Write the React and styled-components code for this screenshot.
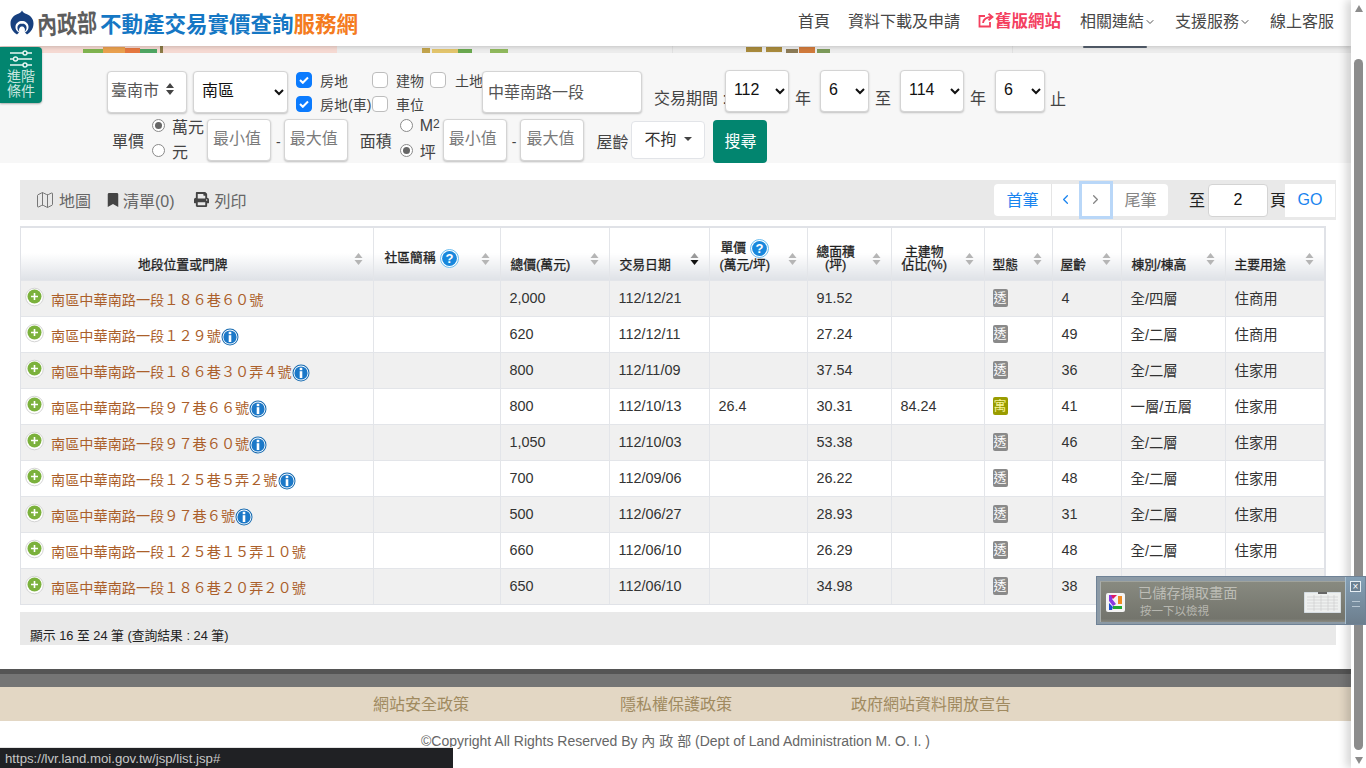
import React from "react";
import styled, { createGlobalStyle } from "styled-components";
import { Map as MapIcon, ChevronDown, ChevronLeft, ChevronRight } from "lucide-react";
import { FaBookmark, FaPrint } from "react-icons/fa";

const FONT = `"Liberation Sans", "Noto Sans CJK TC", sans-serif`;

const Global = createGlobalStyle`
  html, body { margin: 0; padding: 0; height: 768px; overflow: hidden; background: #fff; }
  body { font-family: ${FONT}; color: #212529; }
  * { box-sizing: border-box; }
`;

const Shell = styled.div`
  position: relative; display: flex; width: 1366px; height: 768px; overflow: hidden;
`;
const Page = styled.div`
  width: 1351px; flex: none; display: flex; flex-direction: column;
`;

/* header */
const Header = styled.header`
  height: 46px; display: flex; align-items: center; justify-content: space-between;
  padding: 0 17px 0 10px; background: #fff; position: relative; z-index: 2;
  box-shadow: 0 1px 4px rgba(0,0,0,.18);
`;
const Brand = styled.div`display: flex; align-items: center; height: 46px;`;
const Ministry = styled.span`
  font-size: 20px; font-weight: 700; color: #5d5d5d; margin: 0 3px 0 3px; width: 60px;
  letter-spacing: 0; white-space: nowrap; transform: rotate(-3deg) translateY(-1px) scale(1, 1.25);
`;
const SiteTitle = styled.span`
  font-size: 21.5px; font-weight: 700; white-space: nowrap; margin-top: -1px;
  color: ${p => (p.$accent ? "#f47b20" : "#1577c4")};
`;
const Nav = styled.nav`display: flex; align-items: center; gap: 19px; margin-top: -6px;`;
const NavLink = styled.a`
  display: inline-flex; align-items: center; white-space: nowrap;
  margin-left: ${p => p.$ml || 0}px;
  font-size: ${p => (p.$hot ? 16.5 : 16)}px;
  color: ${p => (p.$hot ? "#f4405f" : "#474747")};
  font-weight: ${p => (p.$hot ? 700 : 400)};
`;
const NavChevron = styled(ChevronDown)`color: #555; margin-top: 3px;`;

const Banner = styled.svg`display: block; width: 1351px; height: 7px; flex: none;`;

/* filters */
const FilterPanel = styled.section`
  height: 110px; flex: none; background: #f7f7f7; padding: 18px 0 0; display: flex; flex-direction: column; gap: 6px;
`;
const AdvancedButton = styled.div`
  position: absolute; left: 0; top: 47px; width: 42px; height: 56px; z-index: 3;
  background: #02856f; color: #c9e6df; border-radius: 0 4px 4px 0;
  display: flex; flex-direction: column; align-items: center; font-size: 14px; line-height: 15px;
  box-shadow: 0 1px 2px rgba(0,0,0,.3);
`;
const SliderGlyph = styled.svg`margin: 3px 0 1px; flex: none;`;
const AdvancedLabel = styled.span`display: block;`;
const FilterRow = styled.div`
  display: flex; align-items: flex-start; height: 42px; padding-left: ${p => p.$left}px;
`;
const Control = styled.div`
  width: ${p => p.$w}px; height: 42px; background: #fff; border: 1px solid #d4d4d4; border-radius: 4px;
  box-shadow: 0 1px 2px rgba(0,0,0,.22); margin-left: ${p => p.$ml || 0}px; flex: none;
  display: flex; align-items: center; justify-content: space-between; padding: 0 12px 6px 3px;
  font-size: 16px; color: #555;
`;
const NativeSelect = styled.select`
  width: ${p => p.$w}px; height: 42px; margin-left: ${p => p.$ml || 0}px; flex: none;
  margin-top: ${p => p.$mt || 0}px;
  background: #fff; border: 1px solid #d4d4d4; border-radius: 4px; color: #111;
  font: 16px ${FONT}; padding: 0 0 4px ${p => p.$pl || 4}px; box-shadow: 0 1px 2px rgba(0,0,0,.22);
`;
const CheckGrid = styled.div`
  display: grid; grid-template-columns: 76px 58px 52px; grid-auto-rows: 24px; margin: -3px 0 0 8px; width: 186px; flex: none;
`;
const CheckItem = styled.label`
  display: flex; align-items: center; font-size: 14px; color: #444; white-space: nowrap; height: 24px; padding-bottom: 1px;
`;
const CheckBox = styled.span`
  width: 16px; height: 16px; border-radius: 4px; flex: none; display: flex; align-items: center; justify-content: center;
  background: ${p => (p.$on ? "#0b7bfe" : "#fff")};
  border: 1px solid ${p => (p.$on ? "#0b7bfe" : "#bdbdbd")};
  margin-right: ${p => p.$mr}px;
`;
const TextField = styled.input`
  width: ${p => p.$w}px; height: 42px; flex: none; margin-left: ${p => p.$ml || 0}px;
  background: #fff; border: 1px solid #d4d4d4; border-radius: 4px; outline: none;
  box-shadow: 0 1px 2px rgba(0,0,0,.22); padding: 0 6px 2px 5px; font: 16px ${FONT}; color: #555;
  &::placeholder { color: #7b7b7b; opacity: 1; }
`;
const FormLabel = styled.span`
  font-size: ${p => p.$fs || 16}px; color: #444; white-space: nowrap; flex: none;
  margin-left: ${p => p.$ml || 0}px; margin-top: ${p => p.$mt || 0}px; line-height: 20px;
`;
const RadioStack = styled.div`
  width: ${p => p.$w}px; display: flex; flex-direction: column; gap: 6px; flex: none; margin-left: ${p => p.$ml || 0}px; margin-top: -3px;
`;
const RadioItem = styled.label`
  display: flex; align-items: center; height: 19px; font-size: 16px; color: #444; white-space: nowrap;
  sup { font-size: 12px; line-height: 0; position: relative; top: -2px; vertical-align: baseline; }
`;
const RadioDot = styled.span`
  width: 13px; height: 13px; border-radius: 50%; border: 1px solid #8a8a8a; background: #fff; flex: none;
  margin-right: 7px; display: flex; align-items: center; justify-content: center;
  &::after { content: ""; width: 7px; height: 7px; border-radius: 50%; background: ${p => (p.$on ? "#666" : "transparent")}; }
`;
const AgeButton = styled.div`
  width: 74px; height: 38px; margin: 2px 0 0 3px; flex: none; background: #fff; border: 1px solid #e2e4e8; border-radius: 4px;
  display: flex; align-items: center; justify-content: center; gap: 8px; font-size: 16px; color: #333; padding-bottom: 5px;
  &::after { content: ""; border: 4px solid transparent; border-top-color: #444; border-bottom: 0; margin-top: 2px; }
`;
const SearchButton = styled.div`
  width: 54px; height: 43px; margin: 1px 0 0 8px; flex: none; background: #02856f; color: #fff; border-radius: 4px;
  display: flex; align-items: center; justify-content: center; font-size: 16px; padding-bottom: 3px;
`;

/* results */
const Results = styled.main`
  padding: 17px 15px 0 20px; flex: none; height: 506px;
`;
const Toolbar = styled.div`
  height: 40px; background: #e9e9e9; display: flex; align-items: center; justify-content: space-between; padding: 0 1px 0 15px;
`;
const ToolGroup = styled.div`display: flex; align-items: center;`;
const Tool = styled.span`
  display: inline-flex; align-items: center; gap: ${p => p.$gap || 4}px; font-size: 16px; color: #666; white-space: nowrap;
  margin-left: ${p => p.$ml || 0}px; padding-bottom: 1px;
  svg { color: ${p => p.$soft ? "#777" : "#444"}; }
`;
const Pager = styled.div`display: flex; align-items: center; height: 38px;`;
const PageButton = styled.span`
  height: ${p => (p.$focus ? 38 : 32)}px; width: ${p => p.$w}px; background: #fff; flex: none;
  display: flex; align-items: center; justify-content: center; font-size: 16px; padding-bottom: 2px;
  color: ${p => (p.$off ? "#858585" : "#1a84ef")};
  border-left: ${p => (p.$sep ? "1px solid #e5e5e5" : "0")};
  border-radius: ${p => p.$r || 0};
  ${p => p.$focus && "border: 3px solid #b9d7f8; margin-left: -1px; z-index: 1; position: relative;"}
`;
const PagerText = styled.span`font-size: 16px; color: #222; flex: none; margin-left: ${p => p.$ml || 0}px; padding-bottom: 2px;`;
const PageInput = styled.div`
  width: 60px; height: 33px; background: #fff; border: 1px solid #d4d4d4; border-radius: 4px; margin-left: 3px; flex: none;
  display: flex; align-items: center; justify-content: center; font-size: 16px; color: #111;
`;
const GoButton = styled.span`
  width: 50px; height: 33px; background: #fff; color: #1a84ef; font-size: 16px; flex: none;
  display: flex; align-items: center; justify-content: center; margin-left: -1px;
`;

const TableFrame = styled.div`margin-top: 6px; width: 1306px; border: 2px solid #e0e2e7; border-left-width: 1px; border-bottom-width: 1px;`;
const Table = styled.table`
  width: 1303px; border-collapse: collapse; table-layout: fixed;
`;
const Th = styled.th`
  height: 52px; position: relative; vertical-align: bottom; text-align: ${p => (p.$center ? "center" : "left")};
  padding: 0 ${p => p.$pr || 10}px ${p => p.$pb || 9}px ${p => p.$pl || 10}px; font-size: 12.8px; line-height: 13px; font-weight: 400; color: #1f1f1f;
  -webkit-text-stroke: .3px #1f1f1f;
  background: linear-gradient(to bottom, #fff 48%, #dfe2e7 100%);
  border-left: 1px solid #e3e5e9;
  &:first-child { border-left: 0; }
`;
const HeadStack = styled.span`display: inline-block; text-align: center; white-space: nowrap;`;
const SortMark = styled.svg`position: absolute; right: 10px; top: 25px;`;
const Tr = styled.tr`background: ${p => (p.$odd ? "#f0f0f0" : "#fff")};`;
const Td = styled.td`
  height: 36px; padding: 0 9px ${p => (p.$cjk ? 2 : 0)}px; font-size: 14.4px; color: #333; border-left: 1px solid #e3e5e9; border-top: 1px solid #e3e5e9;
  white-space: nowrap;
  &:first-child { border-left: 0; padding: 0 0 0 4px; }
`;
const AddressCell = styled.div`display: flex; align-items: center; height: 34px;`;
const AddressText = styled.span`font-size: 14.17px; color: #ab5f2b; margin: 1px 0 0 7px; white-space: nowrap;`;
const TypeBadge = styled.span`
  display: block; width: 15px; height: 18px; border-radius: 2px; font-size: 13px; line-height: 17px; text-align: center; margin-left: -1px;
  background: ${p => (p.$kind === "寓" ? "#999c00" : "#8a8a8a")};
  color: ${p => (p.$kind === "寓" ? "#f6f39a" : "#fff")};
`;
const Summary = styled.div`
  margin-top: 7px; width: 1316px; height: 33px; background: #e9e9e9; color: #222; font-size: 12.8px; line-height: 17px;
  padding: 15px 0 0 10px; white-space: nowrap;
`;

/* footer */
const DarkBar = styled.div`height: 18px; flex: none; background: #757575; border-top: 5px solid #555;`;
const PolicyBar = styled.div`
  height: 34px; flex: none; background: #e3d7c4; display: flex; align-items: center; padding: 0 0 3px 373px; color: #a08a60; font-size: 16px;
`;
const PolicyLink = styled.a`margin-left: ${p => p.$ml || 0}px; white-space: nowrap;`;
const Copyright = styled.div`
  text-align: center; font-size: 14px; color: #666; margin-top: 9px; white-space: nowrap;
`;

/* browser chrome */
const StatusBubble = styled.div`
  position: absolute; left: 0; bottom: 0; width: 453px; height: 21px; background: #202124; color: #c7c7c7;
  font-size: 13.2px; line-height: 21px; padding-left: 5px; border-top: 1px solid #e4e4e4; z-index: 5;
`;
const ScrollTrack = styled.div`
  width: 15px; flex: none; background: #fff; display: flex; flex-direction: column; align-items: center; position: relative;
  z-index: 4; box-shadow: -5px 0 8px rgba(0,0,0,.16); padding-top: 5px;
`;
const ScrollArrow = styled.span`
  width: 0; height: 0; border-left: 4.5px solid transparent; border-right: 4.5px solid transparent;
  ${p => (p.$down ? "border-top: 7px solid #8c8c8c; margin-top: 7px;" : "border-bottom: 7px solid #8c8c8c;")}
`;
const ScrollThumb = styled.span`
  width: 9px; height: 691px; margin-top: 47px; background: #8c8c8c; border-radius: 5px;
`;
const Toast = styled.aside`
  position: absolute; left: 1096px; top: 576px; width: 270px; height: 49px; z-index: 6; display: flex;
  background: #8c9aa6; border: 1px solid #6f8296;
`;
const ToastBody = styled.div`
  flex: 1; margin: 4px 0 2px 3px; padding-left: 5px; background: linear-gradient(#888a80, #73746c 92%, #8a8a82); display: flex; align-items: center;
  border-left: 1px solid #a9aeac; border-top: 1px solid #a0a39c;
`;
const ToastLogo = styled.svg`flex: none;`;
const ToastText = styled.div`flex: 1; margin-left: 13px; color: #bdbdb6; line-height: 18px; margin-top: -1px;`;
const ToastTitle = styled.div`font-size: 14.2px; white-space: nowrap;`;
const ToastSub = styled.div`font-size: 11.5px; margin-left: 2px; white-space: nowrap; color: #b7b7b0;`;
const ToastThumb = styled.svg`flex: none; margin-right: 4px;`;
const ToastSide = styled.div`
  width: 20px; flex: none; background: linear-gradient(#84a0b6, #6d7e8d); border-left: 1px solid #a9c0d0;
  display: flex; flex-direction: column; align-items: center; padding-top: 4px; gap: 5px;
`;
const ToastClose = styled.span`
  width: 11px; height: 11px; border: 1px solid #e6eef3; color: #fff; font-size: 10px; line-height: 9px; text-align: center; background: #6b7f90;
`;
const ToastGrip = styled.span`
  width: 8px; height: 6px; border-top: 1px solid #b7c6d2; border-bottom: 1px solid #b7c6d2; margin-top: 4px; position: relative;
`;

/* drawings */
const LogoMark = () => (
  <svg width="24" height="26" viewBox="0 0 24 26">
    <path d="M12 .5c.8 2 2.600 2.800 4.500 3.600C20.800 5.800 23.500 9.200 23.500 13.500c0 4.800-2.700 8.800-6.500 10.900l-2-2c2.800-1.500 3.800-3.800 3.500-6.200C18 13 15.300 11 12 11s-6 2-6.500 5.200c-.3 2.400.7 4.700 3.500 6.200l-2 2C3.200 22.300.5 18.300.5 13.500.5 9.200 3.200 5.800 7.500 4.100 9.400 3.300 11.200 2.500 12 .5z" fill="#17407f" />
    <path d="M12 13.500c-2.800 0-4.600 1.900-4.600 4.300 0 1.600.8 3 2 3.900-.5-1.400-.5-2.800.2-3.800.6-.9 1.400-1.300 2.400-1.300s1.800.4 2.400 1.300c.7 1 .7 2.400.2 3.800 1.200-.9 2-2.300 2-3.900 0-2.400-1.800-4.300-4.600-4.300z" fill="#17407f" />
  </svg>
);
const ShareBox = () => (
  <svg width="16" height="15" viewBox="0 0 16 15" fill="none" stroke="#f4405f" strokeWidth="1.8" style={{ marginRight: 1 }}>
    <path d="M7 3H1.500v10.500h10.500V9" />
    <path d="M5 10c.5-4 3-6 9-6M10.500 .8 14.500 4l-4 3.200" />
  </svg>
);
const Tick = () => (
  <svg width="10" height="8" viewBox="0 0 10 8" fill="none" stroke="#fff" strokeWidth="2"><path d="M1 4l2.800 2.800L9 1.500" /></svg>
);
const UpDown = () => (
  <svg width="8" height="12" viewBox="0 0 8 12" fill="#444"><path d="M4 0l4 5H0zM4 12l4-5H0z" /></svg>
);
const Sort = ({ active }) => (
  <SortMark width="9" height="12" viewBox="0 0 9 12">
    <path d="M4.500 0l4 5h-8z" fill={active ? "#999" : "#b5b5b5"} />
    <path d="M4.500 12l4-5h-8z" fill={active ? "#111" : "#b5b5b5"} />
  </SortMark>
);
const PlusIcon = () => (
  <svg width="19" height="20" viewBox="0 0 19 20" style={{ flex: "none", marginTop: -3 }}>
    <circle cx="9.500" cy="10" r="8.800" fill="#fff" stroke="#cfcfcf" strokeWidth=".9" />
    <circle cx="9.500" cy="9.500" r="7" fill="#7bb13c" />
    <path d="M9.500 6v7M6 9.500h7" stroke="#fff" strokeWidth="1.600" />
  </svg>
);
const InfoIcon = () => (
  <svg width="18" height="18" viewBox="0 0 18 18" style={{ flex: "none", marginTop: 5 }}>
    <circle cx="9" cy="9" r="8.500" fill="#1469b0" />
    <circle cx="9" cy="9" r="7.500" fill="#fff" />
    <circle cx="9" cy="9" r="6.600" fill="#1b78c8" />
    <rect x="7.700" y="3.800" width="2.600" height="2.400" fill="#fff" />
    <rect x="7.700" y="7.200" width="2.600" height="6.800" fill="#fff" />
  </svg>
);
const HelpIcon = () => (
  <svg width="19" height="19" viewBox="0 0 19 19" style={{ verticalAlign: "middle", marginLeft: 4 }}>
    <circle cx="9.500" cy="9.500" r="9" fill="#fff" stroke="#69bdf0" strokeWidth="1" />
    <circle cx="9.500" cy="9.500" r="7.400" fill="#1888dd" />
    <text x="9.500" y="14" textAnchor="middle" fontSize="13" fontWeight="700" fill="#fff" stroke="none" fontFamily="Liberation Sans">?</text>
  </svg>
);
const Sliders = () => (
  <SliderGlyph width="22" height="18" viewBox="0 0 22 18" fill="#02856f" stroke="#e9f6f3" strokeWidth="1.400">
    <path d="M0 3h22M0 9h22M0 15h22" />
    <circle cx="15" cy="3" r="2" />
    <circle cx="5.500" cy="9" r="2" />
    <circle cx="15" cy="15" r="2" />
  </SliderGlyph>
);

const COLS = [352, 127, 109, 100, 98, 84, 93, 68, 69, 104, 99];

const ROWS = [
  ["南區中華南路一段１８６巷６０號", false, "2,000", "112/12/21", "", "91.52", "", "透", "4", "全/四層", "住商用"],
  ["南區中華南路一段１２９號", true, "620", "112/12/11", "", "27.24", "", "透", "49", "全/二層", "住商用"],
  ["南區中華南路一段１８６巷３０弄４號", true, "800", "112/11/09", "", "37.54", "", "透", "36", "全/二層", "住家用"],
  ["南區中華南路一段９７巷６６號", true, "800", "112/10/13", "26.4", "30.31", "84.24", "寓", "41", "一層/五層", "住家用"],
  ["南區中華南路一段９７巷６０號", true, "1,050", "112/10/03", "", "53.38", "", "透", "46", "全/二層", "住家用"],
  ["南區中華南路一段１２５巷５弄２號", true, "700", "112/09/06", "", "26.22", "", "透", "48", "全/二層", "住家用"],
  ["南區中華南路一段９７巷６號", true, "500", "112/06/27", "", "28.93", "", "透", "31", "全/二層", "住家用"],
  ["南區中華南路一段１２５巷１５弄１０號", false, "660", "112/06/10", "", "26.29", "", "透", "48", "全/二層", "住家用"],
  ["南區中華南路一段１８６巷２０弄２０號", false, "650", "112/06/10", "", "34.98", "", "透", "38", "全/二層", "住家用"],
];

const Check = ({ on, label, mr }) => (
  <CheckItem><CheckBox $on={on} $mr={mr}>{on && <Tick />}</CheckBox>{label}</CheckItem>
);

export default function App() {
  return (
    <Shell>
      <Global />
      <Page>
        <Header>
          <Brand>
            <LogoMark />
            <Ministry>內政部</Ministry>
            <SiteTitle>不動產交易實價查詢</SiteTitle>
            <SiteTitle $accent>服務網</SiteTitle>
          </Brand>
          <Nav>
            <NavLink>首頁</NavLink>
            <NavLink $ml={-1}>資料下載及申請</NavLink>
            <NavLink $hot $ml={-1}><ShareBox />舊版網站</NavLink>
            <NavLink>相關連結<NavChevron size={12} /></NavLink>
            <NavLink>支援服務<NavChevron size={12} /></NavLink>
            <NavLink>線上客服</NavLink>
          </Nav>
        </Header>
        <Banner viewBox="0 0 1351 7" preserveAspectRatio="none">
          <rect width="1351" height="7" fill="#ececec" />
          <rect width="337" height="7" fill="#f5d9d2" />
          <rect x="672" width="1" height="7" fill="#e0e0e0" />
          <rect x="1012" width="1" height="7" fill="#e0e0e0" />
          <rect x="83" y="3" width="20" height="4" fill="#7fb34f" />
          <rect x="103" y="1" width="22" height="6" fill="#e9a04e" />
          <rect x="125" y="2" width="15" height="5" fill="#e5773f" />
          <rect x="140" y="3" width="17" height="4" fill="#4ea562" />
          <rect x="160" y="0" width="3" height="7" fill="#8a7a45" />
          <rect x="422" y="2" width="8" height="5" fill="#c2a44c" />
          <rect x="432" y="3" width="26" height="4" fill="#e2c46c" />
          <rect x="458" y="3" width="14" height="4" fill="#6aa84f" />
          <rect x="490" y="3" width="18" height="4" fill="#8fb85c" />
          <rect x="746" y="1" width="16" height="5" fill="#a88a3c" />
          <rect x="766" y="1" width="16" height="5" fill="#a88a3c" />
          <rect x="786" y="3" width="12" height="4" fill="#8b7a55" />
          <rect x="799" y="1" width="16" height="6" fill="#d07a3c" />
          <rect x="817" y="3" width="13" height="4" fill="#7c9a5a" />
          <rect x="1083" width="64" height="2" rx="1" fill="#55606e" />
        </Banner>
        <FilterPanel>
          <FilterRow $left={107}>
            <Control $w={80}>臺南市<UpDown /></Control>
            <NativeSelect $w={95} $ml={6} $pl={4} defaultValue="南區"><option>南區</option></NativeSelect>
            <CheckGrid>
              <Check on label="房地" mr={8} />
              <Check label="建物" mr={8} />
              <Check label="土地" mr={9} />
              <Check on label="房地(車)" mr={8} />
              <Check label="車位" mr={8} />
            </CheckGrid>
            <TextField $w={160} defaultValue="中華南路一段" />
            <FormLabel $ml={12} $mt={18}>交易期間 :</FormLabel>
            <NativeSelect $w={64} $ml={-2} $mt={-1} $pl={4} defaultValue="112"><option>112</option></NativeSelect>
            <FormLabel $ml={6} $mt={18}>年</FormLabel>
            <NativeSelect $w={49} $ml={9} $mt={-1} defaultValue="6"><option>6</option></NativeSelect>
            <FormLabel $ml={6} $mt={18}>至</FormLabel>
            <NativeSelect $w={64} $ml={9} $mt={-1} defaultValue="114"><option>114</option></NativeSelect>
            <FormLabel $ml={6} $mt={18}>年</FormLabel>
            <NativeSelect $w={50} $ml={9} $mt={-1} defaultValue="6"><option>6</option></NativeSelect>
            <FormLabel $ml={5} $mt={19}>止</FormLabel>
          </FilterRow>
          <FilterRow $left={112}>
            <FormLabel $mt={13}>單價</FormLabel>
            <RadioStack $w={55} $ml={8}>
              <RadioItem><RadioDot $on />萬元</RadioItem>
              <RadioItem><RadioDot />元</RadioItem>
            </RadioStack>
            <TextField $w={64} placeholder="最小值" />
            <FormLabel $ml={5} $mt={13} $fs={14}>-</FormLabel>
            <TextField $w={64} $ml={3} placeholder="最大值" />
            <FormLabel $ml={12} $mt={13}>面積</FormLabel>
            <RadioStack $w={43} $ml={8}>
              <RadioItem><RadioDot />M<sup>2</sup></RadioItem>
              <RadioItem><RadioDot $on />坪</RadioItem>
            </RadioStack>
            <TextField $w={64} placeholder="最小值" />
            <FormLabel $ml={5} $mt={13} $fs={14}>-</FormLabel>
            <TextField $w={64} $ml={4} placeholder="最大值" />
            <FormLabel $ml={12} $mt={14}>屋齡</FormLabel>
            <AgeButton>不拘</AgeButton>
            <SearchButton>搜尋</SearchButton>
          </FilterRow>
        </FilterPanel>
        <AdvancedButton>
          <Sliders />
          <AdvancedLabel>進階</AdvancedLabel>
          <AdvancedLabel>條件</AdvancedLabel>
        </AdvancedButton>
        <Results>
          <Toolbar>
            <ToolGroup>
              <Tool $soft><MapIcon size={20} strokeWidth={1.2} />地圖</Tool>
              <Tool $ml={15} $gap={3}><FaBookmark size={14} />清單(0)</Tool>
              <Tool $ml={19} $gap={6}><FaPrint size={15} />列印</Tool>
            </ToolGroup>
            <Pager>
              <PageButton $w={57} $r="4px 0 0 4px">首筆</PageButton>
              <PageButton $w={29} $sep><ChevronLeft size={15} /></PageButton>
              <PageButton $w={34} $focus $off><ChevronRight size={15} /></PageButton>
              <PageButton $w={55} $off $r="0 4px 4px 0">尾筆</PageButton>
              <PagerText $ml={21}>至</PagerText>
              <PageInput>2</PageInput>
              <PagerText $ml={2}>頁</PagerText>
              <GoButton>GO</GoButton>
            </Pager>
          </Toolbar>
          <TableFrame>
            <Table>
              <colgroup>
                {COLS.map((w, i) => <col key={i} style={{ width: w }} />)}
              </colgroup>
              <thead>
                <tr>
                  <Th $center $pr={38}>地段位置或門牌<Sort /></Th>
                  <Th $pb={12} $pl={11}>社區簡稱<HelpIcon /><Sort /></Th>
                  <Th>總價(萬元)<Sort /></Th>
                  <Th>交易日期<Sort active /></Th>
                  <Th><HeadStack>單價<HelpIcon /><br />(萬元/坪)</HeadStack><Sort /></Th>
                  <Th $pl={9}><HeadStack>總面積<br />(坪)</HeadStack><Sort /></Th>
                  <Th><HeadStack>主建物<br />佔比(%)</HeadStack><Sort /></Th>
                  <Th $pl={8}>型態<Sort /></Th>
                  <Th $pl={8}>屋齡<Sort /></Th>
                  <Th>棟別/棟高<Sort /></Th>
                  <Th $pl={9}>主要用途<Sort /></Th>
                </tr>
              </thead>
              <tbody>
                {ROWS.map((r, i) => (
                  <Tr key={i} $odd={i % 2 === 0}>
                    <Td>
                      <AddressCell>
                        <PlusIcon />
                        <AddressText>{r[0]}</AddressText>
                        {r[1] && <InfoIcon />}
                      </AddressCell>
                    </Td>
                    <Td />
                    <Td>{r[2]}</Td>
                    <Td>{r[3]}</Td>
                    <Td>{r[4]}</Td>
                    <Td>{r[5]}</Td>
                    <Td>{r[6]}</Td>
                    <Td><TypeBadge $kind={r[7]}>{r[7]}</TypeBadge></Td>
                    <Td>{r[8]}</Td>
                    <Td $cjk>{r[9]}</Td>
                    <Td $cjk>{r[10]}</Td>
                  </Tr>
                ))}
              </tbody>
            </Table>
          </TableFrame>
          <Summary>顯示 16 至 24 筆 (查詢結果 : 24 筆)</Summary>
        </Results>
        <DarkBar />
        <PolicyBar>
          <PolicyLink>網站安全政策</PolicyLink>
          <PolicyLink $ml={151}>隱私權保護政策</PolicyLink>
          <PolicyLink $ml={119}>政府網站資料開放宣告</PolicyLink>
        </PolicyBar>
        <Copyright>©Copyright All Rights Reserved By 內 政 部 (Dept of Land Administration M. O. I. )</Copyright>
      </Page>
      <ScrollTrack>
        <ScrollArrow />
        <ScrollThumb />
        <ScrollArrow $down />
      </ScrollTrack>
      <StatusBubble>https://lvr.land.moi.gov.tw/jsp/list.jsp#</StatusBubble>
      <Toast>
        <ToastBody>
          <ToastLogo width="19" height="19" viewBox="0 0 19 19">
            <rect width="19" height="19" rx="2" fill="#f4f4f4" />
            <path d="M3 2h7l-4 4 4 5-3 2-4-5z" fill="#8a38e0" />
            <path d="M3 10l4 4-1 3H3z" fill="#1a4fd0" />
            <path d="M5 2h6L7 6z" fill="#e01860" />
            <rect x="12" y="3" width="4" height="8" fill="#f08a20" />
            <rect x="7" y="13" width="9" height="3" fill="#20a830" />
          </ToastLogo>
          <ToastText>
            <ToastTitle>已儲存擷取畫面</ToastTitle>
            <ToastSub>按一下以檢視</ToastSub>
          </ToastText>
          <ToastThumb width="37" height="21" viewBox="0 0 37 21">
            <rect width="37" height="21" fill="#eef0ef" stroke="#9db3c4" strokeWidth=".6" />
            <rect x="14" y="0" width="9" height="2" fill="#666" />
            <path d="M3 5h31M3 8h31M3 11h31M3 14h31M3 17h31M10 3v16M17 3v16M24 3v16M30 3v16" stroke="#c9c9c9" strokeWidth=".6" />
          </ToastThumb>
        </ToastBody>
        <ToastSide>
          <ToastClose>×</ToastClose>
          <ToastGrip />
        </ToastSide>
      </Toast>
    </Shell>
  );
}
